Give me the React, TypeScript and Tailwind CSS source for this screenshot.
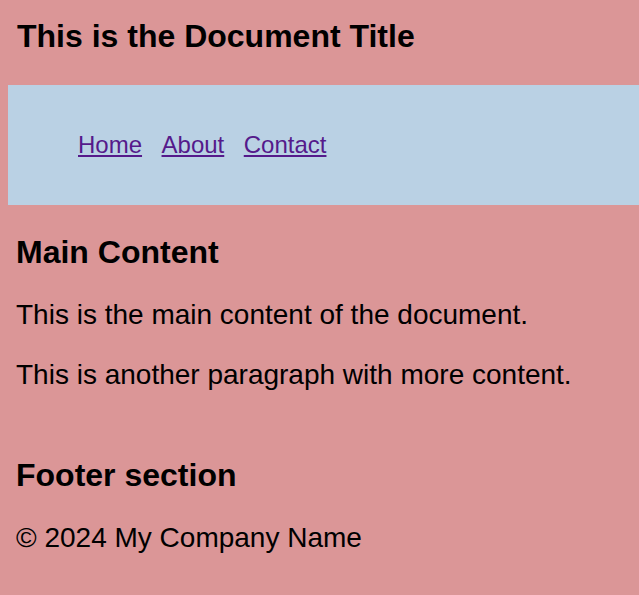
const links = ["Home", "About", "Contact"];

export default function App() {
  return (
    <div className="min-h-screen bg-[#db9697] pt-[18px] font-['Liberation_Sans',Arial,sans-serif] text-black">
      <header>
        <h1 className="pl-[17px] text-[32px] font-bold leading-[37px]">
          This is the Document Title
        </h1>
      </header>

      <nav className="ml-2 mt-[30px] flex h-[120px] items-center gap-[19.5px] bg-[#bad1e4] pl-[70px]">
        {links.map((item) => (
          <a
            key={item}
            href="#"
            className="text-[24px] leading-[28px] text-[#551a8b] underline"
          >
            {item}
          </a>
        ))}
      </nav>

      <main className="pl-4">
        <h2 className="mt-[29px] text-[32px] font-bold leading-[37px]">
          Main Content
        </h2>
        <p className="mt-[28px] text-[28px] leading-[32px]">
          This is the main content of the document.
        </p>
        <p className="mt-[28px] text-[28px] leading-[32px]">
          This is another paragraph with more content.
        </p>
      </main>

      <footer className="pl-4 pb-6">
        <h2 className="mt-[66px] text-[32px] font-bold leading-[37px]">
          Footer section
        </h2>
        <p className="mt-[28px] text-[28px] leading-[32px]">
          © 2024 My Company Name
        </p>
      </footer>
    </div>
  );
}
